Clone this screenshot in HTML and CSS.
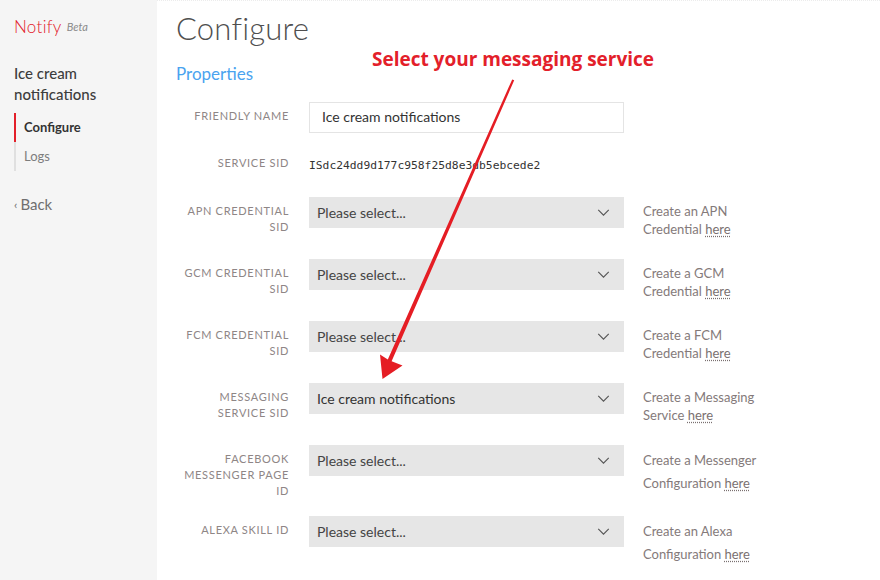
FILE: index.html
```html
<!DOCTYPE html>
<html>
<head>
<meta charset="utf-8">
<link rel="stylesheet" href="styles.css">
</head>
<body>
<div class="app">
  <aside class="sidebar">
    <div class="brand"><span class="brand-name">Notify</span><span class="brand-tag">Beta</span></div>
    <div class="service-name">Ice cream notifications</div>
    <nav class="nav">
      <a class="nav-item active">Configure</a>
      <a class="nav-item">Logs</a>
    </nav>
    <a class="back"><span class="back-icon">‹</span>Back</a>
  </aside>
  <main class="main">
    <h1 class="title">Configure</h1>
    <h2 class="section">Properties</h2>
    <div class="form">
      <div class="row row-name">
        <div class="label">Friendly name</div>
        <div class="input">Ice cream notifications</div>
      </div>
      <div class="row row-sid">
        <div class="label">Service SID</div>
        <div class="sid">ISdc24dd9d177c958f25d8e3db5ebcede2</div>
      </div>
      <div class="row">
        <div class="label">APN credential SID</div>
        <div class="select"><span>Please select...</span><svg class="chev" viewBox="0 0 14 8"><path d="M1 1l6 6 6-6"/></svg></div>
        <div class="help">Create an APN<br>Credential <a>here</a></div>
      </div>
      <div class="row">
        <div class="label">GCM credential SID</div>
        <div class="select"><span>Please select...</span><svg class="chev" viewBox="0 0 14 8"><path d="M1 1l6 6 6-6"/></svg></div>
        <div class="help">Create a GCM<br>Credential <a>here</a></div>
      </div>
      <div class="row">
        <div class="label">FCM credential SID</div>
        <div class="select"><span>Please select...</span><svg class="chev" viewBox="0 0 14 8"><path d="M1 1l6 6 6-6"/></svg></div>
        <div class="help">Create a FCM<br>Credential <a>here</a></div>
      </div>
      <div class="row">
        <div class="label">Messaging service SID</div>
        <div class="select selected"><span>Ice cream notifications</span><svg class="chev" viewBox="0 0 14 8"><path d="M1 1l6 6 6-6"/></svg></div>
        <div class="help">Create a Messaging<br>Service <a>here</a></div>
      </div>
      <div class="row row-tall">
        <div class="label">Facebook messenger page ID</div>
        <div class="select"><span>Please select...</span><svg class="chev" viewBox="0 0 14 8"><path d="M1 1l6 6 6-6"/></svg></div>
        <div class="help help-loose">Create a Messenger<br>Configuration <a>here</a></div>
      </div>
      <div class="row">
        <div class="label">Alexa skill ID</div>
        <div class="select"><span>Please select...</span><svg class="chev" viewBox="0 0 14 8"><path d="M1 1l6 6 6-6"/></svg></div>
        <div class="help help-loose">Create an Alexa<br>Configuration <a>here</a></div>
      </div>
    </div>
  </main>
</div>
<div class="callout">Select your messaging service</div>
<svg class="arrow" width="880" height="580" viewBox="0 0 880 580">
  <polygon points="512.2,79.4 514.2,80.3 391.6,361.2 402.5,365.5 382.5,379 380,354.5 387.8,359.4"/>
</svg>
</body>
</html>
```
FILE: styles.css
```css
* { box-sizing: border-box; }
html, body { margin: 0; padding: 0; }
body {
  width: 880px;
  height: 580px;
  overflow: hidden;
  background: #ffffff;
  font-family: Lato, "Open Sans", sans-serif;
  color: #444;
  position: relative;
}
.app { display: flex; height: 580px; }
.sidebar {
  width: 157px;
  flex: none;
  background: #f5f5f5;
  padding: 16px 0 0 14px;
}
.brand { display: flex; align-items: baseline; gap: 5px; height: 22px; }
.brand-name { color: #e3202a; font-size: 17px; font-weight: 300; letter-spacing: 0.3px; }
.brand-tag { color: #8a8a8a; font-size: 11px; font-style: italic; position: relative; top: -2px; }
.service-name {
  margin-top: 25px;
  width: 110px;
  font-size: 15px;
  line-height: 21px;
  color: #3d3d3d;
  font-weight: 500;
}
.nav { margin-top: 8px; display: flex; flex-direction: column; }
.nav-item {
  display: block;
  border-left: 2px solid #e0e0e0;
  padding-left: 8px;
  height: 29px;
  line-height: 29px;
  font-size: 13px;
  color: #7d7d7d;
}
.nav-item.active { border-left-color: #e3202a; color: #333; font-weight: 700; }
.back {
  display: block;
  margin-top: 23px;
  font-size: 15px;
  color: #6f6f6f;
  line-height: 20px;
}
.back-icon { font-size: 12px; margin-right: 3px; position: relative; top: -1px; }

.main {
  flex: 1;
  padding: 9px 0 0 19px;
  border-top: 1px dotted #ececec;
}
.title {
  margin: 0;
  font-size: 31px;
  line-height: 36px;
  font-weight: 300;
  color: #4f4f4f;
  letter-spacing: 0.2px;
}
.section {
  margin: 17px 0 0;
  font-size: 17px;
  line-height: 22px;
  font-weight: 400;
  color: #4aa3ef;
}
.form { margin-top: 17px; }
.row {
  display: grid;
  grid-template-columns: 113px 315px 200px;
  column-gap: 20px;
  align-items: start;
  height: 62px;
}
.row-name { height: 47px; }
.row-sid { height: 48px; }
.row-tall { height: 71px; }
.label {
  text-align: right;
  text-transform: uppercase;
  font-size: 11px;
  line-height: 16px;
  letter-spacing: 0.7px;
  color: #8e8686;
  padding-top: 6px;
}
.input {
  height: 31px;
  border: 1px solid #e4e4e4;
  padding: 0 12px;
  line-height: 28px;
  font-size: 14px;
  color: #333;
}
.sid {
  font-family: "DejaVu Sans Mono", monospace;
  font-size: 11.3px;
  line-height: 31px;
  color: #333;
  margin-top: 1px;
}
.select {
  height: 31px;
  background: #e6e6e6;
  display: flex;
  align-items: center;
  justify-content: space-between;
  padding: 0 14px 0 8px;
  font-size: 14px;
  color: #444;
}
.select.selected { color: #333; }
.chev { width: 13px; height: 7px; fill: none; stroke: #555; stroke-width: 1.3; }
.help {
  margin-left: -1px;
  font-size: 13px;
  line-height: 18px;
  color: #847a7a;
  padding-top: 5px;
}
.help-loose { line-height: 23px; padding-top: 4px; }
.help a { text-decoration: underline dotted; text-underline-offset: 2px; color: #7a7070; }

.callout {
  position: absolute;
  left: 362px;
  top: 46px;
  width: 302px;
  text-align: center;
  font-family: "Open Sans", sans-serif;
  font-weight: 700;
  font-size: 19px;
  line-height: 26px;
  color: #e3202a;
  white-space: nowrap;
}
.arrow { position: absolute; left: 0; top: 0; pointer-events: none; }
.arrow polygon { fill: #e51d24; }
```
